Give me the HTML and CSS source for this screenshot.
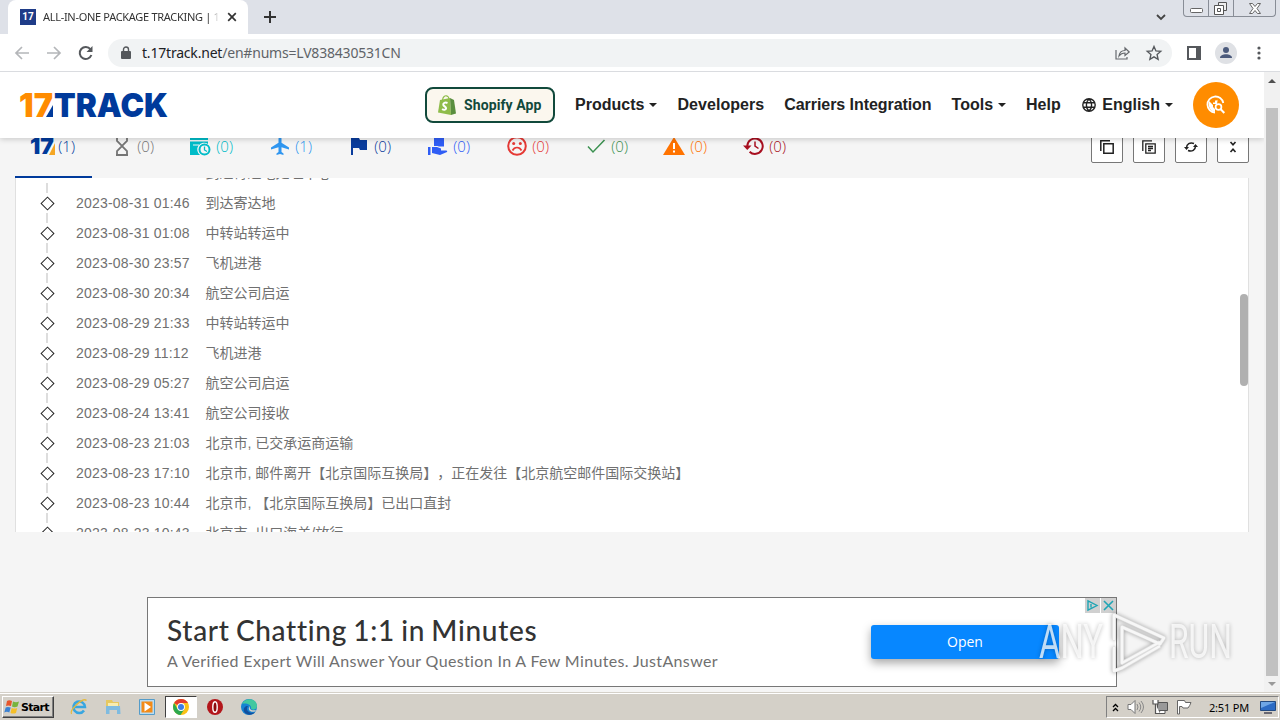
FILE: index.html
```html
<!DOCTYPE html>
<html lang="en">
<head>
    <meta charset="UTF-8">
    <title>ALL-IN-ONE PACKAGE TRACKING | 17TRACK</title>
    <link rel="stylesheet" href="styles.css">
</head>
<body>

    <!-- browser -->
    <div class="tabstrip">
        <div class="tab">
            <span class="favicon">17</span>
            <span class="tab-title">ALL-IN-ONE PACKAGE TRACKING | 1</span>
            <svg class="tab-close" width="10" height="10" viewBox="0 0 10 10"><path d="M1.2 1.2l7.6 7.6M8.8 1.2L1.2 8.8" stroke="#333" stroke-width="1.7"/></svg>
        </div>
        <svg class="new-tab" width="12" height="12" viewBox="0 0 12 12"><path d="M6 0v12M0 6h12" stroke="#333" stroke-width="2"/></svg>
        <svg class="tab-search" width="10" height="7" viewBox="0 0 10 7"><path d="M1 1l4 4 4-4" fill="none" stroke="#444" stroke-width="1.8"/></svg>
        <div class="win-buttons">
            <span><svg width="13" height="5" viewBox="0 0 13 5"><rect x=".5" y=".5" width="12" height="4" rx="1" fill="#fff" stroke="#666"/></svg></span>
            <span><svg width="14" height="13" viewBox="0 0 14 13"><path d="M4.5.5h8v8h-8z" fill="#eee" stroke="#555"/><path d="M.5 3.500h9v9h-9z" fill="#fff" stroke="#555"/><path d="M3.500 6.500h3v3h-3z" fill="none" stroke="#555"/></svg></span>
            <span class="win-close"><svg width="12" height="11" viewBox="0 0 12 11"><path d="M.5.5h3L6 3.500 8.500.5h3L8 5.500l3.500 5h-3L6 7.500l-2.500 3h-3L4 5.500z" fill="#fff" stroke="#666"/></svg></span>
        </div>
    </div>
    <div class="toolbar">
        <svg width="14" height="14" viewBox="0 0 14 14"><path d="M14 7H1.500M7 1L1 7l6 6" fill="none" stroke="#b4b6b9" stroke-width="1.700"/></svg>
        <svg width="14" height="14" viewBox="0 0 14 14"><path d="M0 7h12.500M7 1l6 6-6 6" fill="none" stroke="#b4b6b9" stroke-width="1.700"/></svg>
        <svg width="16" height="16" viewBox="0 0 16 16"><path d="M13.400 10a6 6 0 1 1-.9-5.700" fill="none" stroke="#55585c" stroke-width="2"/><path d="M14.500 1v6h-6z" fill="#55585c"/></svg>
        <div class="address">
            <svg width="10" height="13" viewBox="0 0 10 13"><path d="M2.500 6V3.500a2.500 2.500 0 0 1 5 0V6" fill="none" stroke="#55585c" stroke-width="1.400"/><rect y="5" width="10" height="8" rx="1" fill="#55585c"/></svg>
            <span class="url"><b>t.17track.net</b>/en#nums=LV838430531CN</span>
            <svg class="share" width="15" height="14" viewBox="0 0 15 14"><path d="M1 4v9h11v-2M4 10c.5-4 3-5.500 6-5.500V2l4.200 4L10 9.500V7C7 7 5.500 8 4 10z" fill="none" stroke="#66696d" stroke-width="1.200"/></svg>
            <svg width="16" height="16" viewBox="0 0 14 14"><path d="M7 1.300l1.700 3.900 4.200.4-3.200 2.800.9 4.200L7 10.400l-3.600 2.200.9-4.200L1.100 5.600l4.200-.4z" fill="none" stroke="#55585c" stroke-width="1.200"/></svg>
        </div>
        <svg class="side-panel" width="14" height="14" viewBox="0 0 14 14"><path d="M1 1h12v12H1z" fill="none" stroke="#55585c" stroke-width="2"/><path d="M9 1h4v12H9z" fill="#55585c"/></svg>
        <svg class="avatar" width="22" height="22" viewBox="0 0 22 22"><circle cx="11" cy="11" r="11" fill="#dfe1e5"/><circle cx="11" cy="8" r="3" fill="#4b5a7c"/><path d="M5 16c0-5 12-5 12 0z" fill="#4b5a7c"/></svg>
        <svg width="4" height="14" viewBox="0 0 4 14" fill="#55585c"><circle cx="2" cy="2" r="1.600"/><circle cx="2" cy="7" r="1.600"/><circle cx="2" cy="12" r="1.600"/></svg>
    </div>

    <div class="window">
        <div class="page">
            <header>
                <svg class="logo" width="150" height="28" viewBox="0 0 150 28">
                    <text class="logo-text orange" x="-1" y="26" textLength="34" lengthAdjust="spacingAndGlyphs">17</text>
                    <path d="M33 14v12h-7z" fill="#003a9b"/>
                    <text class="logo-text blue" x="34" y="26" textLength="114" lengthAdjust="spacingAndGlyphs">TRACK</text>
                </svg>
                <nav>
                    <a class="shopify">
                        <svg width="18" height="20" viewBox="0 0 18 20"><path d="M2 5l10-2 1 17-13-2.500z" fill="#8fbc4a"/><path d="M12 3l4 2 2 13.500-5 1.500z" fill="#5a8e3e"/><path d="M4.500 5C5 1.500 7 .5 8.500.8S11 3 11 4" fill="none" stroke="#8fbc4a" stroke-width="1.200"/><path d="M9.500 8C7 7 5 8 5.300 9.800c.3 1.600 3 1.700 2.800 3.700-.2 1.600-2.600 1.500-4 .5" fill="none" stroke="#fff" stroke-width="2"/></svg>
                        Shopify App
                    </a>
                    <a>Products<i class="caret"></i></a>
                    <a class="developers">Developers</a>
                    <a class="carriers">Carriers Integration</a>
                    <a>Tools<i class="caret"></i></a>
                    <a class="help">Help</a>
                    <a class="lang"><svg width="14" height="14" viewBox="0 0 14 14"><path d="M.8 7a6.200 6.200 0 1 0 12.400 0A6.200 6.200 0 1 0 .8 7M1.500 4.800h11M1.500 9.200h11M7 1C3.500 4 3.500 10 7 13c3.500-3 3.500-9 0-12" fill="none" stroke="#222" stroke-width="1.400"/></svg>English<i class="caret"></i></a>
                    <a class="track"><svg width="18" height="18" viewBox="0 0 18 18"><path d="M16.300 7A8 8 0 1 0 8 16.500" fill="none" stroke="#fff" stroke-width="1.800"/><path d="M2 5l4 4v2l2 2v3C3 15 1 11 2 5zM11 1.500c0 3-1 3-3 3v2H6v1.500h4z" fill="#fff"/><circle cx="11.500" cy="11" r="2.900" fill="#ff8c00" stroke="#fff" stroke-width="1.700"/><path d="M13.500 13l3.800 4" stroke="#fff" stroke-width="2"/></svg></a>
                </nav>
            </header>

            <div class="status-bar">
                <div class="status all active"><svg width="25" height="20" viewBox="0 0 25 20"><path d="M24 7v12h-6z" fill="#f5a623"/><text class="all-text" x="-1" y="18" textLength="24" lengthAdjust="spacingAndGlyphs">17</text></svg>(1)</div>
                <div class="status gray"><svg width="20" height="20" viewBox="0 0 20 20"><path d="M4 1h12M4 19h12M5 1v4l5 5 5-5V1M5 19v-4l5-5 5 5v4" fill="none" stroke="currentColor" stroke-width="1.800"/></svg>(0)</div>
                <div class="status cyan"><svg width="21" height="20" viewBox="0 0 21 20"><path d="M0 0h18v4H0zM0 5.500h18V8a6 6 0 0 0-8 11H0z" fill="currentColor"/><path d="M3 9h6" stroke="#f5f5f5"/><circle cx="14.500" cy="13.500" r="5" fill="#f5f5f5" stroke="currentColor" stroke-width="2"/><path d="M14.500 10.500v3.500l2.500 1.500" fill="none" stroke="currentColor" stroke-width="1.300"/></svg>(0)</div>
                <div class="status sky"><svg width="20" height="20" viewBox="0 0 20 20"><path d="M19 13.500v-2l-7.500-4.700V2.500a1.500 1.500 0 0 0-3 0v4.300L1 11.500v2l7.500-2.300V16l-2 1.500V19l3.500-1 3.500 1v-1.500l-2-1.500v-4.800z" fill="currentColor"/></svg>(1)</div>
                <div class="status navy"><svg width="20" height="20" viewBox="0 0 20 20"><path d="M2 2h8l1 2h7v10h-7l-1-2H4v7H2z" fill="currentColor"/></svg>(0)</div>
                <div class="status royal"><svg width="20" height="20" viewBox="0 0 20 20"><path d="M6 1h10v9.500h-5L9.500 10H6zM0 11h2.500v8H0zM4 11h5l4 1.500v2h4.500c1.500 0 2 .5 1.500 1.500L12 19l-8-2z" fill="currentColor"/></svg>(0)</div>
                <div class="status red"><svg width="20" height="20" viewBox="0 0 20 20"><circle cx="10" cy="10" r="8.800" fill="none" stroke="currentColor" stroke-width="2"/><circle cx="6.700" cy="7.500" r="1.500" fill="currentColor"/><circle cx="13.300" cy="7.500" r="1.500" fill="currentColor"/><path d="M5.500 14.500c2-4 7-4 9 0" fill="none" stroke="currentColor" stroke-width="1.700"/></svg>(0)</div>
                <div class="status green"><svg width="20" height="20" viewBox="0 0 20 20"><path d="M2 10.500l5 5.500L18.500 4" fill="none" stroke="currentColor" stroke-width="1.500"/></svg>(0)</div>
                <div class="status orange"><svg width="22" height="20" viewBox="0 0 22 20"><path d="M11 1l11 18H0z" fill="currentColor"/><path d="M11 7v6M11 14.500v2" stroke="#fff" stroke-width="2"/></svg>(0)</div>
                <div class="status maroon"><svg width="21" height="20" viewBox="0 0 21 20"><path d="M4.300 10a7.700 7.700 0 1 1 2.300 5.700" fill="none" stroke="currentColor" stroke-width="2"/><path d="M0 9.500h8.500L4.300 14z" fill="currentColor"/><path d="M12 5.500V10l3.500 2.500" fill="none" stroke="currentColor" stroke-width="1.500"/></svg>(0)</div>
                <div class="actions">
                    <span><svg width="14" height="14" viewBox="0 0 14 14"><path d="M.8 11V.8H10M3.800 3.800h9.400v9.400H3.800z" fill="none" stroke="#222" stroke-width="1.500"/></svg></span>
                    <span><svg width="14" height="14" viewBox="0 0 14 14"><path d="M.8 11V.8H10M3.800 3.800h9.400v9.400H3.800zM6 6.500h5M6 8.500h5M6 10.500h3" fill="none" stroke="#222" stroke-width="1.300"/></svg></span>
                    <span><svg width="14" height="12" viewBox="0 0 14 12"><path d="M2.500 7C2.500 3 6 1 10 2.500M11.500 5c0 4-3.500 6-7.500 4.500" fill="none" stroke="#222" stroke-width="1.500"/><path d="M0 6h5L2.500 9zM9 6h5l-2.500-3z" fill="#222"/></svg></span>
                    <span><svg width="8" height="12" viewBox="0 0 8 12"><path d="M1.500 1L4 3.800 6.500 1M1.500 11L4 8.200 6.500 11" fill="none" stroke="#222" stroke-width="1.600"/></svg></span>
                </div>
            </div>

            <div class="panel">
                <ul class="events">
                    <li><time>2023-08-31 06:00</time>到达寄达地处理中心</li>
                    <li><time>2023-08-31 01:46</time>到达寄达地</li>
                    <li><time>2023-08-31 01:08</time>中转站转运中</li>
                    <li><time>2023-08-30 23:57</time>飞机进港</li>
                    <li><time>2023-08-30 20:34</time>航空公司启运</li>
                    <li><time>2023-08-29 21:33</time>中转站转运中</li>
                    <li><time>2023-08-29 11:12</time>飞机进港</li>
                    <li><time>2023-08-29 05:27</time>航空公司启运</li>
                    <li><time>2023-08-24 13:41</time>航空公司接收</li>
                    <li><time>2023-08-23 21:03</time>北京市, 已交承运商运输</li>
                    <li><time>2023-08-23 17:10</time>北京市, 邮件离开【北京国际互换局】，正在发往【北京航空邮件国际交换站】</li>
                    <li><time>2023-08-23 10:44</time>北京市, 【北京国际互换局】已出口直封</li>
                    <li><time>2023-08-23 10:43</time>北京市, 出口海关/放行</li>
                </ul>
                <div class="panel-thumb"></div>
            </div>

            <div class="ad">
                <div class="ad-text">
                    <div class="ad-title">Start Chatting 1:1 in Minutes</div>
                    <div class="ad-sub">A Verified Expert Will Answer Your Question In A Few Minutes. JustAnswer</div>
                </div>
                <div class="ad-button">Open</div>
                <div class="ad-choices">
                    <span><svg width="11" height="11" viewBox="0 0 11 11"><path d="M1 .8l9 4.700-9 4.700zM4 4v3.500" fill="none" stroke="#1fa5b5" stroke-width="1.400"/></svg></span>
                    <span><svg width="11" height="11" viewBox="0 0 11 11"><path d="M1 1l9 9M10 1l-9 9" stroke="#1fa5b5" stroke-width="1.600"/></svg></span>
                </div>
            </div>
        </div>
        <div class="scrollbar">
            <i class="arrow up"></i>
            <div class="scroll-thumb"></div>
            <i class="arrow down"></i>
        </div>
    </div>

    <!-- watermark -->
    <svg class="watermark" width="204" height="70" viewBox="0 0 204 70">
        <g class="mark-line">
            <text x="5" y="51" textLength="64" lengthAdjust="spacingAndGlyphs">ANY</text>
            <text x="135" y="51" textLength="63" lengthAdjust="spacingAndGlyphs">RUN</text>
        </g>
        <path class="mark-shade" d="M80 33V8l50 23-4 6-38-17v36l38-21M80 40v24l8-3 38-22"/>
        <path class="mark-light" d="M80 33V8l50 23-4 6-38-17v36l38-21M80 40v24l8-3 38-22"/>
    </svg>

    <div class="taskbar">
        <div class="start">
            <svg width="16" height="16" viewBox="0 0 16 16"><path d="M3 2q2-1.500 5 0L7 7Q4 6 2 7z" fill="#e8562a"/><path d="M9 2.500q3 1.500 6 0l-1.500 5q-3 1.500-5.500 0z" fill="#78b43c"/><path d="M1.700 8.500q2-1 5 0l-1.400 5q-2.500-1.500-5 0z" fill="#3c82d2"/><path d="M7.700 9q3 1 5.500 0L12 14q-3 1-5.500 0z" fill="#f5bf28"/></svg>
            Start
        </div>
        <div class="quick">
            <span><svg width="18" height="18" viewBox="0 0 18 18"><path d="M14 12.500A5.800 5.800 0 1 1 15 9H5" fill="none" stroke="#38a6e0" stroke-width="2.500"/><path d="M1.500 16C-1 12 13-1 16.500 2.500" fill="none" stroke="#e5b93c" stroke-width="1.300"/></svg></span>
            <span><svg width="16" height="16" viewBox="0 0 16 16"><path d="M1 1h6l1 2h6v7H1z" fill="#e6c860"/><path d="M3 4h10v4H3z" fill="#f7ecb0"/><path d="M1 7h14l.5 8H12v-4H4.500v4H1z" fill="#7fbbe0"/></svg></span>
            <span><svg width="16" height="16" viewBox="0 0 16 16"><path d="M.5.5h15v15H.5z" fill="#b9dcf2" stroke="#559cc9"/><path d="M2.500 2.500h11v11h-11z" fill="#f38b18"/><path d="M5.500 3.500l6.500 4.500-6.500 4.500z" fill="#fff"/></svg></span>
            <span class="running"><svg width="16" height="16" viewBox="0 0 16 16"><circle cx="8" cy="8" r="8" fill="#fbc116"/><path d="M8 8L1.100 4A8 8 0 0 1 15 4H8z" fill="#e33b2e"/><path d="M1.100 4A8 8 0 0 0 7.500 16L11.500 10 8 8 4.500 10z" fill="#2da94f"/><circle cx="8" cy="8" r="3.900" fill="#fff"/><circle cx="8" cy="8" r="3" fill="#3c7de6"/></svg></span>
            <span><svg width="16" height="16" viewBox="0 0 16 16"><circle cx="8" cy="8" r="8" fill="#b3161b"/><ellipse cx="8" cy="8" rx="2.200" ry="5.300" fill="#8d0a0d" stroke="#fff" stroke-width="1.400"/></svg></span>
            <span><svg width="16" height="16" viewBox="0 0 16 16"><circle cx="8" cy="8" r="8" fill="#1583d2"/><path d="M1 5C4-2 16-1 16 7c0 4-5 4.500-6 2.500 1-3-4-6-9-4.500z" fill="#42c8a0"/><path d="M7 7c-3 4 1 8 7 6.500-3 3-9 3-11-1-1-3 1-6 4-5.500z" fill="#124f9e"/><path d="M9 7c-1 3 1 5 6 4l-1 1.500C9 14 6 10 9 7z" fill="#d4d0c8"/></svg></span>
        </div>
        <div class="tray">
            <svg width="7" height="9" viewBox="0 0 7 9"><path d="M1 4l2.500-2.500L6 4M1 8l2.500-2.500L6 8" fill="none" stroke="#000" stroke-width="1.300"/></svg>
            <svg width="17" height="14" viewBox="0 0 17 14"><path d="M1 4.500h3l4-4v13l-4-4H1z" fill="#fff" stroke="#777"/><path d="M10 4q2 3 0 6M12 2.500q3.500 4.500 0 9M14 1q5 6 0 12" fill="none" stroke="#888"/></svg>
            <svg width="16" height="16" viewBox="0 0 16 16"><path d="M5.500 3.500h10v8h-10z" fill="#999" stroke="#555"/><path d="M8 11.500h5v3H7z" fill="#fff" stroke="#555"/><path d="M1 1v4h5V1M3.500 5v9.500H8" fill="#fff" stroke="#555" stroke-width="1.200"/></svg>
            <svg width="16" height="16" viewBox="0 0 16 16"><path d="M1.500 15V1.500h7l1 2h5.500q-1 3-3 5.500H7l-1-1.500H3.500V15z" fill="#fff" stroke="#666"/></svg>
            <span class="clock">2:51 PM</span>
            <svg width="16" height="14" viewBox="0 0 16 14"><path d="M.5 1.500h15v9H.5z" fill="#2c6bc4" stroke="#234a80"/><path d="M1 2h14L1 8z" fill="#6ea6e6"/><path d="M4 13h8" stroke="#445" stroke-width="1.500"/></svg>
        </div>
    </div>

</body>
</html>
```
FILE: styles.css
```css
* {
    box-sizing: border-box;
}
body {
    margin: 0;
    width: 1280px;
    height: 720px;
    overflow: hidden;
    display: flex;
    flex-direction: column;
    position: relative;
    font-family: "Liberation Sans", "Noto Sans CJK SC", sans-serif;
    background: #f5f5f5;
}
svg {
    display: block;
    flex: none;
    overflow: visible;
}

/* tabs */
.tabstrip {
    height: 34px;
    background: #dee1e8;
    display: flex;
    align-items: center;
    padding-left: 8px;
    flex: none;
}
.tab {
    width: 240px;
    height: 34px;
    background: #fff;
    border-radius: 8px 8px 0 0;
    display: flex;
    align-items: center;
    padding: 0 11px 0 12px;
}
.favicon {
    width: 16px;
    height: 16px;
    background: #1f3c88;
    color: #fff;
    font: bold 10px/16px "Roboto", sans-serif;
    text-align: center;
}
.tab-title {
    width: 176px;
    margin: 0 8px 0 7px;
    font: 11px/16px "Noto Sans", sans-serif;
    letter-spacing: -0.3px;
    color: #333;
    white-space: nowrap;
    overflow: hidden;
    -webkit-mask-image: linear-gradient(to right, #000 166px, transparent);
}
.new-tab {
    margin-left: 16px;
}
.tab-search {
    margin-left: auto;
}
.win-buttons {
    display: flex;
    height: 17px;
    margin: 0 4px 0 17px;
    align-self: flex-start;
    border: 1px solid #888d96;
    border-top: 0;
    border-radius: 0 0 4px 4px;
}
.win-buttons span {
    width: 25px;
    display: flex;
    align-items: center;
    justify-content: center;
    border-right: 1px solid #888d96;
}
.win-buttons span:first-child {
    padding-top: 5px;
}
.win-buttons .win-close {
    width: 41px;
    border: 0;
}

/* toolbar */
.toolbar {
    height: 38px;
    background: #fff;
    border-bottom: 1px solid #dadce0;
    display: flex;
    align-items: center;
    padding: 0 19px 0 15px;
    flex: none;
}
.toolbar > svg {
    margin-right: 18px;
}
.toolbar > svg:nth-child(3) {
    margin-left: -1px;
    margin-right: 14px;
}
.address {
    flex: 1;
    height: 28px;
    border-radius: 14px;
    background: #f1f3f4;
    display: flex;
    align-items: center;
    padding: 0 10px 0 13px;
}
.url {
    margin-left: 11px;
    font: 14px/20px "Noto Sans", sans-serif;
    letter-spacing: -0.2px;
    color: #5f6368;
}
.url b {
    font-weight: 400;
    color: #202124;
}
.share {
    margin-left: auto;
    margin-right: 16px;
}
.toolbar .side-panel {
    margin: 0 14px 0 15px;
}
.toolbar .avatar {
    margin-right: 20px;
}
.toolbar > svg:last-child {
    margin: 0;
}

/* page */
.window {
    height: 620px;
    display: flex;
    flex: none;
}
.page {
    width: 1264px;
    height: 620px;
    overflow: hidden;
    background: #f5f5f5;
}
header {
    height: 66px;
    background: #fff;
    box-shadow: 0 1px 6px rgba(0, 0, 0, 0.2);
    display: flex;
    align-items: center;
    justify-content: space-between;
    padding: 0 25px 0 20px;
    position: relative;
    z-index: 2;
}
.logo-text {
    font: 900 33px "Inter", sans-serif;
}
.logo-text.orange {
    fill: #ff8c00;
}
.logo-text.blue {
    fill: #003a9b;
}
nav {
    display: flex;
    align-items: center;
    gap: 20px;
}
nav a {
    display: flex;
    align-items: center;
    font-size: 16px;
    font-weight: bold;
    color: #222;
    white-space: nowrap;
}
.caret {
    margin-left: 5px;
    border: 4px solid transparent;
    border-top-color: #222;
    border-bottom: 0;
}
.shopify {
    width: 130px;
    height: 36px;
    border: 2px solid #11493b;
    border-radius: 8px;
    background: #fbf7ee;
    color: #11493b;
    font: bold 14px "Roboto", sans-serif;
    letter-spacing: 0.1px;
    padding-left: 11px;
    gap: 8px;
}
.developers {
    letter-spacing: 0.06px;
}
.carriers {
    letter-spacing: -0.06px;
}
.help {
    margin-right: 1.5px;
}
.lang svg {
    margin-right: 6px;
}
.track {
    width: 46px;
    height: 46px;
    border-radius: 50%;
    background: #ff8c00;
    justify-content: center;
}

/* status tabs, the top is hidden behind the header */
.status-bar {
    height: 62px;
    margin: -22px 15px 0 15px;
    display: flex;
    gap: 2px;
}
.status {
    width: 77px;
    height: 62px;
    display: flex;
    align-items: center;
    justify-content: flex-end;
    gap: 5px;
    padding: 0 17px 2px 0;
    font: 300 15px "Open Sans", sans-serif;
}
.status.active {
    border-bottom: 2px solid #003a9b;
    padding-bottom: 0;
    gap: 2px;
}
.all-text {
    font: 900 22px "Inter", sans-serif;
    fill: #003a9b;
}
.all { color: #003a9b; }
.gray { color: #757575; }
.cyan { color: #00bcc8; }
.sky { color: #2f96f0; }
.navy { color: #0a3c9c; }
.royal { color: #2f5df5; }
.red { color: #e53935; }
.green { color: #3b9150; }
.orange { color: #ff7300; }
.maroon { color: #a80f20; }
.actions {
    margin-left: auto;
    display: flex;
    gap: 10px;
    padding-top: 15px;
}
.actions span {
    width: 32px;
    height: 32px;
    border: 1px solid #777;
    border-radius: 2px;
    background: #fff;
    display: flex;
    align-items: center;
    justify-content: center;
}

/* tracking events */
.panel {
    width: 1234px;
    height: 354px;
    margin-left: 15px;
    background: #fff;
    border: 1px solid #e0e0e0;
    border-width: 0 1px;
    overflow: hidden;
    position: relative;
}
.events {
    list-style: none;
    margin: -20px 0 0;
    padding: 0;
    text-spacing-trim: space-all;
}
.events li {
    height: 30px;
    display: flex;
    align-items: center;
    position: relative;
    padding-left: 60px;
    font-size: 14px;
    line-height: 30px;
    color: #707070;
    white-space: pre;
}
.events li::before {
    content: "";
    position: absolute;
    left: 27px;
    top: 11px;
    width: 8px;
    height: 8px;
    border: 1px solid #222;
    transform: translate(-0.5px, -0.5px) rotate(45deg);
}
.events li:first-child::before {
    display: none;
}
.events li::after {
    content: "";
    position: absolute;
    left: 30px;
    top: 25px;
    width: 2px;
    height: 10px;
    background: #ddd;
}
.events time {
    width: 129.5px;
    letter-spacing: 0.2px;
}
.panel-thumb {
    position: absolute;
    right: 0;
    top: 116px;
    width: 8px;
    height: 92px;
    border-radius: 4px;
    background: #b0b0b0;
}

/* ad */
.ad {
    width: 970px;
    height: 90px;
    margin: 65px 0 0 147px;
    border: 1px solid #777;
    background: #fff;
    position: relative;
    display: flex;
    align-items: center;
    justify-content: space-between;
    padding: 0 57px 0 19px;
}
.ad-title {
    font: 500 28px/34px "Lato", sans-serif;
    letter-spacing: 0.7px;
    word-spacing: -1.5px;
    color: #333;
    white-space: nowrap;
}
.ad-sub {
    font: 16px/22px "Lato", sans-serif;
    letter-spacing: 0.35px;
    color: #707070;
    margin: 3px 0 0;
    white-space: nowrap;
}
.ad-button {
    width: 188px;
    height: 34px;
    border-radius: 3px;
    background: #0787ff;
    box-shadow: 0 4px 10px rgba(0, 0, 0, 0.35);
    color: #fff;
    font: 14px/34px "Open Sans", sans-serif;
    text-align: center;
}
.ad-choices {
    position: absolute;
    top: 0;
    right: 0;
    display: flex;
    gap: 1px;
}
.ad-choices span {
    width: 15px;
    height: 15px;
    background: #d0d0d0;
    display: flex;
    align-items: center;
    justify-content: center;
}

/* page scrollbar */
.scrollbar {
    width: 16px;
    height: 620px;
    background: #f1f1f1;
    display: flex;
    flex-direction: column;
    align-items: center;
    padding: 7px 0 6px;
}
.arrow {
    border: 4px solid transparent;
}
.arrow.up {
    border-top: 0;
    border-bottom-color: #505050;
}
.arrow.down {
    border-bottom: 0;
    border-top-color: #999;
    margin-top: auto;
}
.scroll-thumb {
    width: 12px;
    height: 568px;
    margin-top: 25px;
    background: #c1c1c1;
}

/* watermark */
.watermark {
    position: absolute;
    left: 1034px;
    top: 607px;
    z-index: 5;
    filter: drop-shadow(0 0 2px rgba(0, 0, 0, 0.35));
}
.mark-line {
    font: 400 48px "Roboto", sans-serif;
    fill: #fff;
    fill-opacity: 0.75;
}
.mark-shade, .mark-light {
    fill: none;
    stroke: #ddd;
    stroke-width: 4;
    stroke-linejoin: round;
}
.mark-light {
    stroke: #f7f7f7;
    stroke-width: 2.5;
}

/* taskbar */
.taskbar {
    height: 28px;
    background: #d4d0c8;
    border-top: 1px solid #d4d0c8;
    box-shadow: inset 0 1px #fff;
    display: flex;
    align-items: center;
    padding: 1px 1px 0 2px;
    flex: none;
}
.start {
    width: 52px;
    height: 22px;
    border: 1px solid;
    border-color: #fff #404040 #404040 #fff;
    box-shadow: inset -1px -1px #808080;
    display: flex;
    align-items: center;
    gap: 1px;
    padding-left: 1px;
    font: bold 11px "DejaVu Sans", sans-serif;
    letter-spacing: -0.7px;
}
.quick {
    display: flex;
    gap: 2px;
    margin-left: 9px;
}
.quick span {
    width: 32px;
    height: 22px;
    display: flex;
    align-items: center;
    justify-content: center;
}
.quick .running {
    border: 1px solid;
    border-color: #404040 #fff #fff #404040;
    background: #fff;
}
.tray {
    width: 173px;
    height: 22px;
    margin-left: auto;
    border: 1px solid;
    border-color: #808080 #fff #fff #808080;
    display: flex;
    align-items: center;
    gap: 8px;
    padding-left: 5px;
}
.clock {
    width: 43px;
    margin: 0 0 0 9px;
    font: 11px "Noto Sans", sans-serif;
    letter-spacing: -0.2px;
    white-space: nowrap;
}
```
